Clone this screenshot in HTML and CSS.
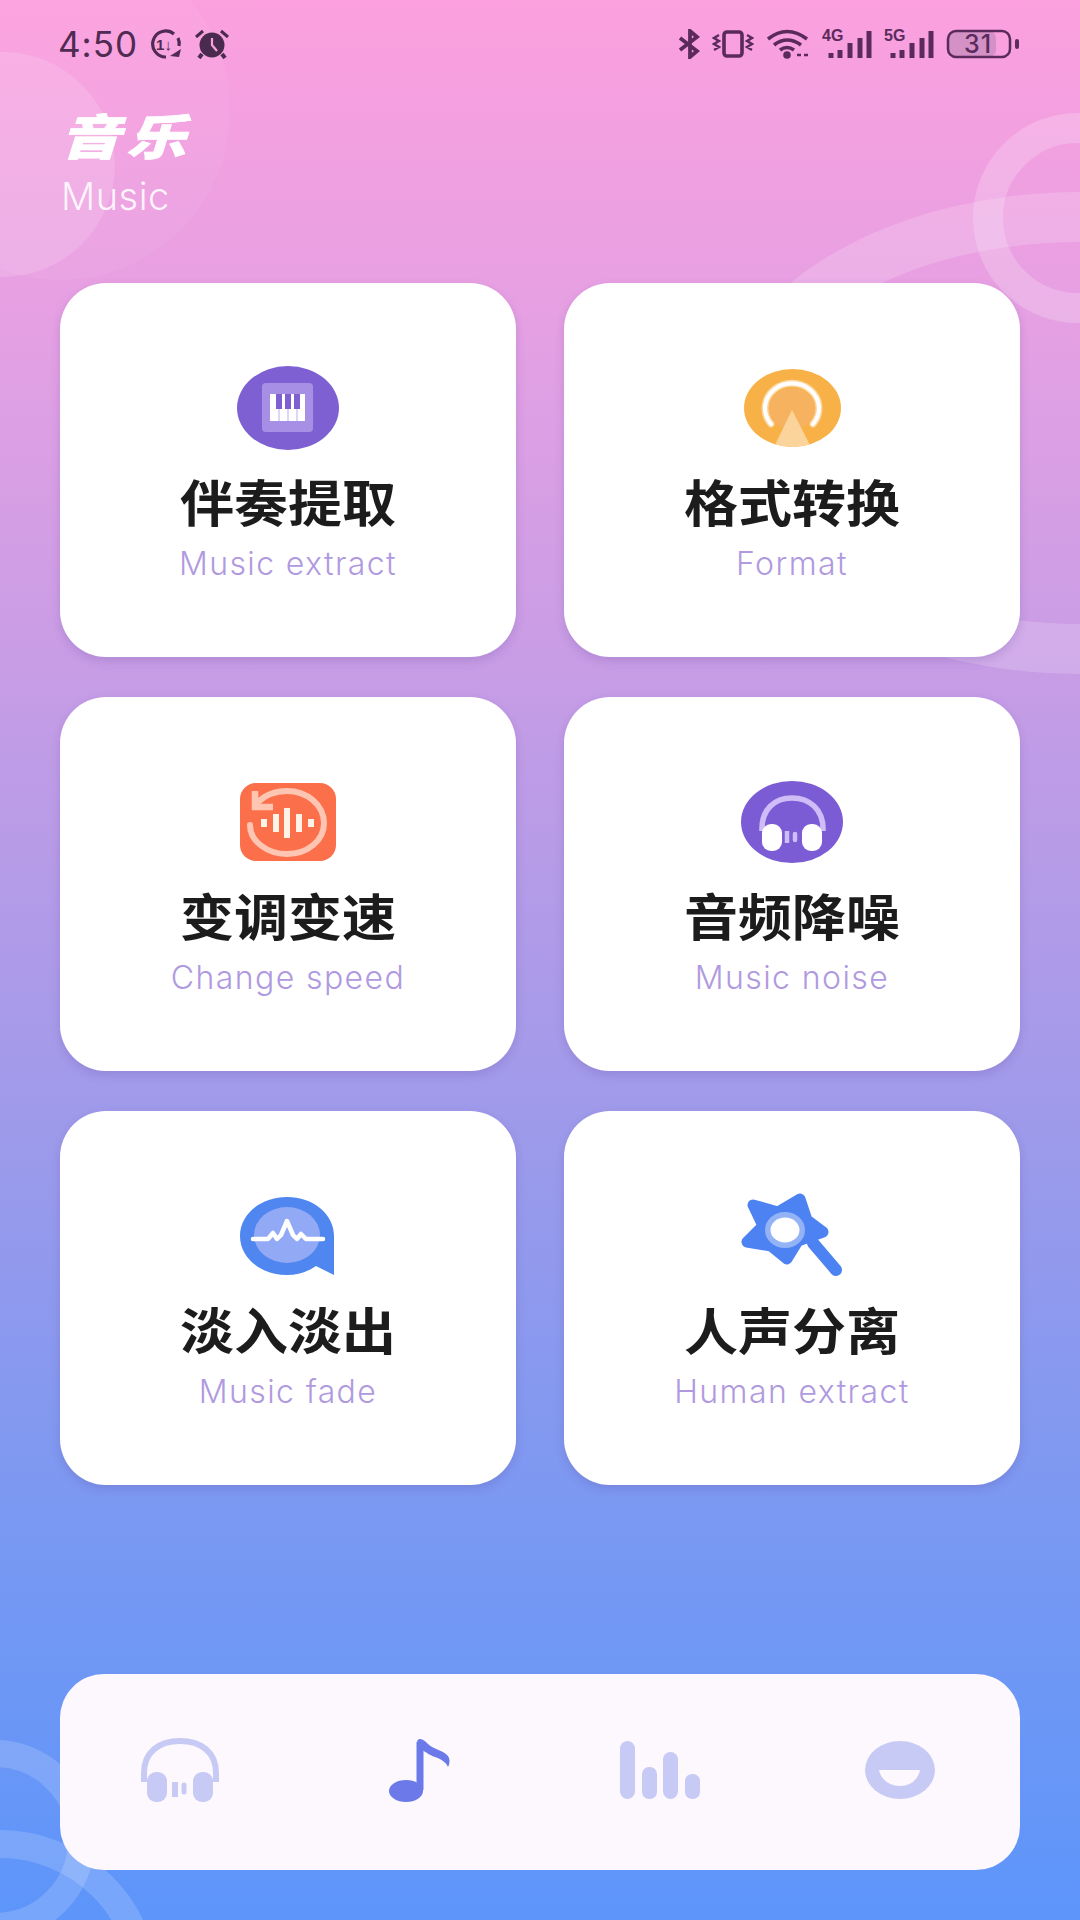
FILE: index.html
```html
<!DOCTYPE html>
<html lang="zh-CN">
<head>
    <meta charset="UTF-8">
    <meta name="viewport" content="width=device-width, initial-scale=1.0">
    <title>音乐</title>
    <link rel="stylesheet" href="styles.css">
</head>
<body>
<div class="phone">
    <!-- background decoration -->
    <div class="blob blob-big"></div>
    <div class="blob blob-small"></div>
    <div class="ring ring-top"></div>
    <div class="ring ring-wide"></div>
    <div class="ring ring-low-a"></div>
    <div class="ring ring-low-b"></div>

    <div class="statusbar">
        <div class="status-left">
            <span class="clock">4:50</span>
            <svg width="34" height="30" viewBox="0 0 34 30">
                <path d="M25 5A13 13 0 1 0 17 28" fill="none" stroke="#4f2a52" stroke-width="3.200"/>
                <path d="M29 9A13 13 0 0 1 30 17" fill="none" stroke="#4f2a52" stroke-width="3.200"/>
                <text x="15" y="21" class="svg-mini">1↓</text>
                <path d="M21 27l11-7-2 8z" fill="#4f2a52"/>
            </svg>
            <svg width="36" height="30" viewBox="0 0 36 30">
                <circle cx="18" cy="16" r="12.500" fill="#4a2b4f"/>
                <path d="M18 9v7l5 6" fill="none" stroke="#f6a0dc" stroke-width="2.200"/>
                <path d="M2 8L9 2M34 8L27 2" stroke="#4a2b4f" stroke-width="3"/>
                <path d="M8 25l-3 4M28 25l3 4" stroke="#4a2b4f" stroke-width="4"/>
            </svg>
        </div>
        <div class="status-right">
            <svg width="22" height="30" viewBox="0 0 22 30">
                <path d="M2 9l17 13-7 6V2l7 6L2 21" fill="none" stroke="#5b2a5c" stroke-width="3.800"/>
            </svg>
            <svg width="42" height="30" viewBox="0 0 42 30">
                <rect x="12" y="3" width="18" height="24" rx="3" fill="none" stroke="#5b2a5c" stroke-width="3.600"/>
                <path d="M7 6L2 9l5 3-5 3 5 3-5 3M35 6l5 3-5 3 5 3-5 3 5 3" fill="none" stroke="#5b2a5c" stroke-width="2.400"/>
            </svg>
            <svg width="44" height="30" viewBox="0 0 44 30">
                <path d="M2 10Q21-5 41 10M8 16Q21 6 35 16M14 21Q21 16 28 21" fill="none" stroke="#5b2a5c" stroke-width="3.600"/>
                <circle cx="21" cy="26" r="3.800" fill="#5b2a5c"/>
                <path d="M31 26h4M38 26h4" stroke="#5b2a5c" stroke-width="2.400"/>
            </svg>
            <svg width="50" height="36" viewBox="0 -3 50 36">
                <text x="0" y="12" class="svg-net">4G</text>
                <path d="M9 24v5M18 21v8M28 14v15M38 9v20M47 2v27" stroke="#5b2a5c" stroke-width="5"/>
            </svg>
            <svg width="50" height="36" viewBox="0 -3 50 36">
                <text x="0" y="12" class="svg-net">5G</text>
                <path d="M9 24v5M18 21v8M28 14v15M38 9v20M47 2v27" stroke="#5b2a5c" stroke-width="5"/>
            </svg>
            <svg width="74" height="30" viewBox="0 0 74 30">
                <rect x="2" y="2" width="48" height="26" rx="7" fill="#d491c6"/>
                <rect x="2" y="2" width="62" height="26" rx="8" fill="none" stroke="#5b2a5c" stroke-width="2.500"/>
                <rect x="69" y="10" width="4" height="10" rx="2" fill="#5b2a5c"/>
                <text x="32" y="24" class="svg-battery">31</text>
            </svg>
        </div>
    </div>

    <header class="page-head">
        <h1>音乐</h1>
        <p>Music</p>
    </header>

    <main class="cards">
        <a class="card">
            <div class="card-icon">
                <svg width="102" height="84" viewBox="0 0 102 84">
                    <ellipse cx="51" cy="42" rx="51" ry="42" fill="#7f60d2"/>
                    <rect x="25" y="17" width="51" height="49" rx="4" fill="#a88fe6"/>
                    <rect x="33" y="28" width="35" height="27" fill="#fff"/>
                    <path d="M39 28h6v15h-6zM48 28h6v15h-6zM57 28h6v15h-6z" fill="#7f60d2"/>
                    <path d="M42 43v12M51 43v12M60 43v12" stroke="#c9bbef" stroke-width="1.200"/>
                </svg>
            </div>
            <h2>伴奏提取</h2>
            <p>Music extract</p>
        </a>
        <a class="card">
            <div class="card-icon">
                <svg width="97" height="78" viewBox="0 0 97 78">
                    <defs>
                        <clipPath id="format-clip"><ellipse cx="48.500" cy="39" rx="48.500" ry="39"/></clipPath>
                    </defs>
                    <ellipse cx="48.500" cy="39" rx="48.500" ry="39" fill="#f8b146"/>
                    <ellipse cx="48" cy="40" rx="23" ry="21" fill="#f7b25f"/>
                    <path d="M27 55A27 25 0 1 1 69 55" fill="none" stroke="#fbd9a6" stroke-width="7" stroke-linecap="round"/>
                    <path d="M27 55A27 25 0 1 1 69 55" fill="none" stroke="#fff" stroke-width="4" stroke-linecap="round"/>
                    <path d="M48 41L68 80H29z" fill="#fbd49c" clip-path="url(#format-clip)"/>
                </svg>
            </div>
            <h2>格式转换</h2>
            <p>Format</p>
        </a>
        <a class="card">
            <div class="card-icon">
                <svg width="96" height="78" viewBox="0 0 96 78">
                    <rect width="96" height="78" rx="16" fill="#fb6f4b"/>
                    <path d="M17 20C25 12 35 8 47 8C67 8 84 22 84 40C84 58 67 71 47 71C27 71 10 58 10 42" fill="none" stroke="#ffc5b3" stroke-width="6" stroke-linecap="round"/>
                    <path d="M15 8V24H33" fill="none" stroke="#ffc5b3" stroke-width="6.500"/>
                    <path d="M24 36v8M36 31v18M47 25v30M59 31v18M71 36v8" stroke="#fff2e6" stroke-width="6"/>
                </svg>
            </div>
            <h2>变调变速</h2>
            <p>Change speed</p>
        </a>
        <a class="card">
            <div class="card-icon">
                <svg width="102" height="82" viewBox="0 0 102 82">
                    <ellipse cx="51" cy="41" rx="51" ry="41" fill="#7c5cd5"/>
                    <path d="M21 50C20 28 34 17 51 17C68 17 83 28 82 50" fill="none" stroke="#cebdf6" stroke-width="5.500"/>
                    <rect x="21" y="43" width="20" height="27" rx="9" fill="#fff"/>
                    <rect x="61" y="43" width="20" height="27" rx="9" fill="#fff"/>
                    <path d="M46 50v12" stroke="#cebdf6" stroke-width="4.500"/>
                    <path d="M54 53v6" stroke="#cebdf6" stroke-width="4.500" stroke-linecap="round"/>
                </svg>
            </div>
            <h2>音频降噪</h2>
            <p>Music noise</p>
        </a>
        <a class="card">
            <div class="card-icon">
                <svg width="97" height="78" viewBox="0 0 97 78">
                    <path d="M47 0C73 0 94 17 94 39V78L76 69C67 75 58 78 47 78C21 78 0 61 0 39C0 17 21 0 47 0z" fill="#5086ef"/>
                    <ellipse cx="47" cy="38" rx="33" ry="28" fill="#92aaf5"/>
                    <path d="M13 42H28L33 36L37 42L41 38L47 24L53 38L57 42L61 37L66 42H83" fill="none" stroke="#fff" stroke-width="4.500" stroke-linecap="round" stroke-linejoin="round"/>
                </svg>
            </div>
            <h2>淡入淡出</h2>
            <p>Music fade</p>
        </a>
        <a class="card">
            <div class="card-icon">
                <svg width="102" height="86" viewBox="0 0 102 86">
                    <path d="M12 12L37 19L59 6L66 27L82 39L57 48L46 66L30 53L6 49L22 33z" fill="#4c82f2" stroke="#4c82f2" stroke-width="11" stroke-linejoin="round"/>
                    <path d="M72 50L95 77" stroke="#4c82f2" stroke-width="12" stroke-linecap="round"/>
                    <ellipse cx="44" cy="37" rx="20" ry="18" fill="#93b3f6"/>
                    <ellipse cx="44" cy="37" rx="14.500" ry="12.500" fill="#fff"/>
                </svg>
            </div>
            <h2>人声分离</h2>
            <p>Human extract</p>
        </a>
    </main>

    <nav class="tabbar">
        <div class="tab">
            <svg width="78" height="64" viewBox="0 0 78 64">
                <path d="M3 44V35C3 14 18 3 39 3C60 3 75 14 75 35V44" fill="none" stroke="#c6caf5" stroke-width="6"/>
                <rect x="6" y="34" width="20" height="30" rx="9" fill="#c6caf5"/>
                <rect x="52" y="34" width="20" height="30" rx="9" fill="#c6caf5"/>
                <path d="M34 44v15" stroke="#c6caf5" stroke-width="6"/>
                <path d="M43 47v7" stroke="#c6caf5" stroke-width="5" stroke-linecap="round"/>
            </svg>
        </div>
        <div class="tab">
            <svg width="62" height="64" viewBox="0 0 62 64">
                <ellipse cx="17" cy="53" rx="17" ry="11" fill="#6b79e9"/>
                <path d="M31 52V4" stroke="#6b79e9" stroke-width="7"/>
                <path d="M28 3C31-1 35 2 39 6C44 11 54 12 59 18C61 21 61 25 59 29C57 24 52 21 46 19C40 17 37 14 33 12z" fill="#6b79e9"/>
            </svg>
        </div>
        <div class="tab">
            <svg width="80" height="58" viewBox="0 0 80 58">
                <rect x="0" y="0" width="15" height="58" rx="7.500" fill="#c6caf5"/>
                <rect x="22" y="26" width="15" height="32" rx="7" fill="#c6caf5"/>
                <rect x="43" y="11" width="15" height="47" rx="7.500" fill="#c6caf5"/>
                <rect x="65" y="33" width="15" height="25" rx="7" fill="#c6caf5"/>
            </svg>
        </div>
        <div class="tab">
            <svg width="70" height="58" viewBox="0 0 70 58">
                <ellipse cx="35" cy="29" rx="35" ry="29" fill="#c6caf5"/>
                <path d="M14 29H55C53 39 45 45 35 45C25 45 16 39 14 29z" fill="#fdf8fd"/>
            </svg>
        </div>
    </nav>
</div>
</body>
</html>
```

FILE: styles.css
```css
* {
    box-sizing: border-box;
}
body {
    margin: 0;
    font-family: "Noto Sans CJK SC", sans-serif;
}
.phone {
    position: relative;
    width: 1080px;
    height: 1920px;
    overflow: hidden;
    display: flex;
    flex-direction: column;
    padding: 28px 60px 50px;
    background: linear-gradient(180deg, #fca0de 0%, #e3a0e3 18%, #c29ce6 38%, #9f9aea 58%, #7598f3 82%, #5d95fa 100%);
}

/* background shapes */
.blob, .ring {
    position: absolute;
    border-radius: 50%;
}
.blob-big {
    left: -110px;
    top: -60px;
    width: 340px;
    height: 340px;
    background: rgba(255, 255, 255, 0.05);
}
.blob-small {
    left: -110px;
    top: 52px;
    width: 225px;
    height: 225px;
    background: rgba(255, 255, 255, 0.14);
}
.ring {
    border-style: solid;
}
.ring-top {
    left: 973px;
    top: 113px;
    width: 210px;
    height: 210px;
    border-width: 30px;
    border-color: rgba(255, 255, 255, 0.2);
}
.ring-wide {
    left: 710px;
    top: 192px;
    width: 740px;
    height: 482px;
    border-width: 50px;
    border-color: rgba(255, 255, 255, 0.17);
}
.ring-low-a {
    left: -105px;
    top: 1740px;
    width: 200px;
    height: 200px;
    border-width: 27px;
    border-color: rgba(255, 255, 255, 0.16);
}
.ring-low-b {
    left: -159px;
    top: 1830px;
    width: 318px;
    height: 318px;
    border-width: 28px;
    border-color: rgba(255, 255, 255, 0.16);
}

/* status bar */
.statusbar {
    position: relative;
    display: flex;
    justify-content: space-between;
    align-items: center;
    height: 32px;
    margin-left: -2px;
}
.status-left {
    display: flex;
    align-items: center;
    gap: 11px;
}
.clock {
    font-family: Inter, sans-serif;
    font-size: 35px;
    line-height: 32px;
    color: #4f2a52;
    letter-spacing: 1px;
    width: 80px;
}
.status-right {
    display: flex;
    align-items: center;
    gap: 12px;
}
.svg-mini {
    font-family: "Liberation Sans", sans-serif;
    font-size: 15px;
    font-weight: 700;
    fill: #4f2a52;
    text-anchor: middle;
}
.svg-net {
    font-family: "Liberation Sans", sans-serif;
    font-size: 16px;
    font-weight: 700;
    fill: #5b2a5c;
}
.svg-battery {
    font-family: Inter, sans-serif;
    font-size: 25px;
    font-weight: 500;
    fill: #5b2a5c;
    text-anchor: middle;
    letter-spacing: 1px;
}

/* heading */
.page-head {
    position: relative;
    margin: 44px 0 0;
    height: 179px;
    color: #fff;
}
.page-head h1 {
    margin: 0;
    font-size: 60px;
    line-height: 60px;
    font-weight: 900;
    font-style: italic;
    letter-spacing: 6px;
    -webkit-text-stroke: 1px #fff;
    transform: scaleY(0.8);
}
.page-head p {
    margin: 10px 0 0;
    padding-left: 1px;
    font-family: Inter, sans-serif;
    font-size: 38px;
    font-weight: 300;
    line-height: 44px;
    letter-spacing: 0.5px;
    color: rgba(255, 255, 255, 0.88);
}

/* feature cards */
.cards {
    position: relative;
    display: grid;
    grid-template-columns: 456px 456px;
    grid-auto-rows: 374px;
    column-gap: 48px;
    row-gap: 40px;
}
.card {
    display: flex;
    flex-direction: column;
    align-items: center;
    padding-top: 75px;
    background: #fff;
    border-radius: 46px;
    box-shadow: 0 4px 10px rgba(90, 60, 150, 0.2);
}
.card-icon {
    height: 100px;
    display: flex;
    align-items: center;
    justify-content: center;
}
.card h2 {
    margin: 13px 0 0;
    font-size: 54px;
    line-height: 60px;
    font-weight: 700;
    color: #1c1c1c;
    transform: scaleY(0.93);
}
.card p {
    margin: 13px 0 0;
    font-family: Inter, sans-serif;
    font-size: 32px;
    font-weight: 300;
    line-height: 40px;
    letter-spacing: 1.4px;
    color: #b09adf;
}

/* bottom tabs */
.tabbar {
    position: relative;
    display: grid;
    grid-template-columns: repeat(4, 1fr);
    align-items: center;
    justify-items: center;
    height: 196px;
    margin-top: auto;
    background: #fdf8fd;
    border-radius: 44px;
}
.tab {
    display: flex;
    margin-top: -4px;
}
```
